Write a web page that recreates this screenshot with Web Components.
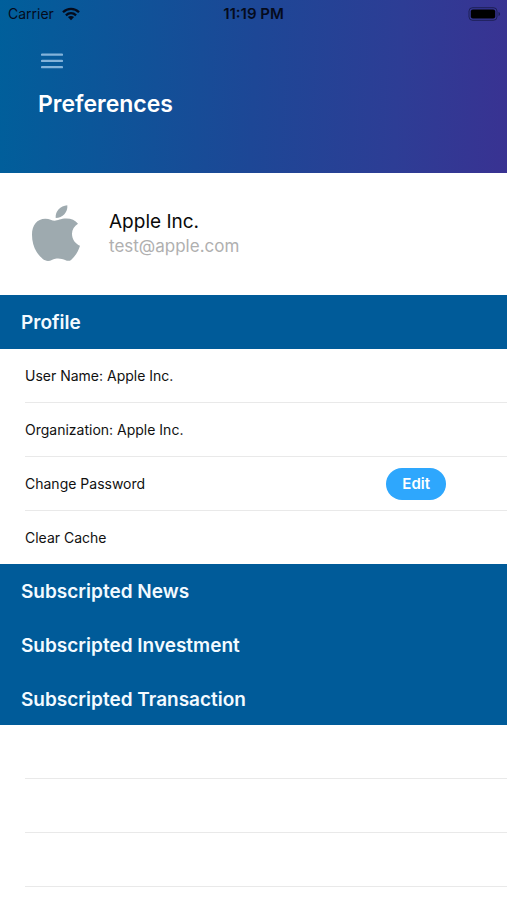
<!DOCTYPE html>
<html lang="en">
<head>
<meta charset="utf-8">
<meta name="viewport" content="width=device-width, initial-scale=1">
<title>Preferences</title>
<style>
  html { background: #fff; }
  body {
    margin: 0;
    font-family: Inter, "Liberation Sans", sans-serif;
    color: #111;
    --brand: #005b99;
    --line: #e9e9e9;
  }
</style>
</head>
<body>
<preferences-page></preferences-page>

<script>
const define = (name, html) => {
  const template = document.createElement('template');
  template.innerHTML = html;
  customElements.define(name, class extends HTMLElement {
    constructor() {
      super();
      this.attachShadow({ mode: 'open' }).append(template.content.cloneNode(true));
    }
  });
};

define('status-bar', `
<style>
  :host { display: grid; grid-template-columns: 1fr auto 1fr; align-items: center; height: 20px; padding: 4px 8px; font-size: 14px; line-height: 20px; color: #050b1c; }
  .left { display: flex; align-items: center; gap: 8px; }
  .time { font-size: 15px; font-weight: 600; }
  .battery { justify-self: end; margin-right: -2px; }
  svg { display: block; }
</style>
<div class="left">
  <span>Carrier</span>
  <svg width="18" height="14" viewBox="0 0 18 14" role="img" aria-label="Wi-Fi">
    <g fill="none" stroke="currentColor" stroke-width="2.3">
      <path d="M1 5.3C5.600 .8 12.400 .8 17 5.300"/>
      <path d="M3.900 8.300C6.900 5.500 11.100 5.500 14.100 8.300"/>
    </g>
    <path fill="currentColor" d="M9 13.200 5.900 10.100C7.600 8.500 10.400 8.500 12.100 10.100Z"/>
  </svg>
</div>
<span class="time">11:19 PM</span>
<svg class="battery" width="33" height="14" viewBox="0 0 33 14" role="img" aria-label="Battery full">
  <rect x="1" y=".7" width="28" height="12.600" rx="3.500" fill="none" stroke="#050b1c" stroke-opacity=".5"/>
  <rect x="2.800" y="2.500" width="24.400" height="9" rx="2" fill="#000"/>
  <path d="M30.500 5v4c1-.4 1.600-1.100 1.600-2s-.6-1.600-1.600-2z" fill="#050b1c" opacity=".5"/>
</svg>`);

define('page-header', `
<style>
  :host { display: block; box-sizing: border-box; height: 173px; background: linear-gradient(93deg, #005f9b 0%, #1d4796 50%, #2d3d95 78%, #393292 100%); color: #fff; }
  .body { padding: 18px 38px 0; }
  button { display: block; margin: 0; padding: 6px 3px; border: 0; background: none; color: #83b3da; cursor: pointer; }
  svg { display: block; }
  h1 { margin: 12px 0 0; font-size: 23px; line-height: 32px; font-weight: 600; }
</style>
<status-bar></status-bar>
<div class="body">
  <button type="button" aria-label="Open menu">
    <svg width="22" height="18" viewBox="0 0 22 18" stroke="currentColor" stroke-width="2.200" stroke-linecap="round"><path d="M1 2.600H21M1 8.900H21M1 15.100H21"/></svg>
  </button>
  <h1><slot></slot></h1>
</div>`);

define('account-card', `
<style>
  :host { display: flex; align-items: center; gap: 29px; box-sizing: border-box; height: 122px; padding: 0 32px 2px; background: #fff; }
  svg { display: block; flex: none; }
  .name { font-size: 19px; line-height: 26px; color: #0a0a0a; }
  .email { font-size: 17px; line-height: 22px; color: #b0b0b0; }
</style>
<svg width="48" height="56" viewBox="36 29 144 168" fill="#9eaaaf" role="img" aria-label="Apple logo">
  <path d="M107 68C105 48 121 31 142 29.500C144 50 128 68 107 68Z"/>
  <path d="M104 76C113 76 122 69.500 139 69.500C154 69.500 166 75 174 85C163 92 156 102 156 115C156 132 166 145 180 151C175 168 166 182 154 193C150 197 143 197.500 137 195C127 190.500 116 188 106 190.500C98 192.500 93 197 84 197C70 197 57 180 50 170C41 156 36 137 36 118C36 89 51 70 76 70C89 70 96 76 104 76Z"/>
</svg>
<div>
  <div class="name"><slot name="name"></slot></div>
  <div class="email"><slot name="email"></slot></div>
</div>`);

define('section-heading', `
<style>
  :host { display: flex; align-items: center; box-sizing: border-box; height: 54px; padding: 2px 21px 0; background: var(--brand); color: #f3faff; }
  :host(.end) { height: 53px; }
  h2 { margin: 0; font-size: 19px; line-height: 26px; font-weight: 600; }
</style>
<h2><slot></slot></h2>`);

define('setting-row', `
<style>
  :host { display: block; padding-left: 25px; background: #fff; }
  .row { display: flex; align-items: center; justify-content: space-between; box-sizing: border-box; height: 54px; padding-right: 61px; border-bottom: 1px solid var(--line); font-size: 14px; line-height: 20px; }
  :host(.end) .row { height: 53px; border-bottom: 0; }
</style>
<div class="row"><span><slot></slot></span><slot name="action"></slot></div>`);

define('pill-button', `
<style>
  :host { display: block; }
  button { display: block; box-sizing: border-box; height: 32px; padding: 0 16px; border: 0; border-radius: 16px; background: #2ea7fd; color: #fff; font: 600 15px/32px Inter, "Liberation Sans", sans-serif; cursor: pointer; }
</style>
<button type="button"><slot></slot></button>`);

define('preferences-page', `
<style>
  :host { display: block; }
  section { display: block; }
</style>
<page-header>Preferences</page-header>
<main>
  <account-card><span slot="name">Apple Inc.</span><span slot="email">test@apple.com</span></account-card>
  <section>
    <section-heading>Profile</section-heading>
    <setting-row>User Name: Apple Inc.</setting-row>
    <setting-row>Organization: Apple Inc.</setting-row>
    <setting-row>Change Password<pill-button slot="action">Edit</pill-button></setting-row>
    <setting-row class="end">Clear Cache</setting-row>
  </section>
  <section-heading>Subscripted News</section-heading>
  <section-heading>Subscripted Investment</section-heading>
  <section-heading class="end">Subscripted Transaction</section-heading>
  <setting-row></setting-row>
  <setting-row></setting-row>
  <setting-row></setting-row>
</main>`);
</script>
</body>
</html>
